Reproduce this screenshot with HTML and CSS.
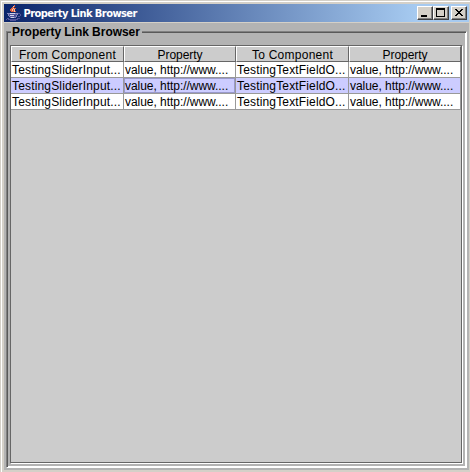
FILE: index.html
```
<!DOCTYPE html>
<html lang="en">
<head>
<meta charset="utf-8">
<title>Property Link Browser</title>
<link rel="stylesheet" href="styles.css">
</head>
<body>
<div class="window">
  <header class="titlebar">
    <svg class="java" width="16" height="16" viewBox="0 0 16 16" shape-rendering="crispEdges">
      <path fill="#e0603c" d="M8 0h1v2h-1zM6 2h2v1h-2zM5 3h2v1h-2zM4 4h2v2h-2zM5 6h2v1h-2zM8 3h2v1h-2zM7 4h1v3h-1zM9 6h1v1h-1z"/>
      <path fill="#f8c4a8" d="M7 1h1v1h-1zM7 3h1v1h-1zM6 4h1v2h-1zM8 4h1v2h-1zM8 6h1v1h-1z"/>
      <path fill="#8487bd" d="M1 8h11v1h-11zM2 9h1v2h-1zM3 11h1v1h-1zM4 12h6v1h-6zM10 10h1v2h-1zM11 9h1v1h-1z"/>
      <path fill="#50549a" d="M3 9h8v1h-8zM3 10h1v1h-1zM8 10h2v1h-2zM4 11h6v1h-6zM4 15h6v1h-6zM12 8h2v1h-2zM14 9h1v2h-1zM12 11h2v1h-2zM1 13h2v1h-2zM0 14h1v1h-1zM2 14h10v1h-10zM11 13h3v1h-3z"/>
      <path fill="#d0d2ea" d="M4 8h5v1h-5zM4 10h4v1h-4zM5 12h3v1h-3z"/>
    </svg>
    <h1>Property Link Browser</h1>
    <div class="controls">
      <button class="ctl" aria-label="Minimize"><svg width="14" height="12" shape-rendering="crispEdges"><path d="M3 8h6v2h-6z"/></svg></button>
      <button class="ctl" aria-label="Maximize"><svg width="14" height="12" shape-rendering="crispEdges"><path fill-rule="evenodd" d="M2 1h9v9h-9zM3 3v6h7v-6z"/></svg></button>
      <button class="ctl close" aria-label="Close"><svg width="14" height="12" shape-rendering="crispEdges"><path d="M3 2h2v1h1v1h2v-1h1v-1h2v1h-1v1h-1v1h-1v1h1v1h1v1h1v1h-2v-1h-1v-1h-2v1h-1v1h-2v-1h1v-1h1v-1h1v-1h-1v-1h-1v-1h-1z"/></svg></button>
    </div>
  </header>
  <main class="content">
    <section class="group">
      <h2>Property Link Browser</h2>
      <div class="scroll">
        <table>
          <colgroup><col class="wide"><col class="narrow"><col class="wide"><col class="narrow"></colgroup>
          <thead><tr><th>From Component</th><th class="v">Property</th><th>To Component</th><th class="v">Property</th></tr></thead>
          <tbody>
            <tr><td>TestingSliderInput...</td><td class="v">value, http://www....</td><td>TestingTextFieldO...</td><td class="v">value, http://www....</td></tr>
            <tr class="selected"><td>TestingSliderInput...</td><td class="v focus">value, http://www....</td><td>TestingTextFieldO...</td><td class="v">value, http://www....</td></tr>
            <tr><td>TestingSliderInput...</td><td class="v">value, http://www....</td><td>TestingTextFieldO...</td><td class="v">value, http://www....</td></tr>
          </tbody>
        </table>
      </div>
    </section>
  </main>
</div>
</body>
</html>
```
FILE: styles.css
```
* { box-sizing: border-box; }
body { margin: 0; background: #d4d0c8; }
.window {
  width: 470px; height: 472px; padding: 3px 1px 2px 3px;
  background: #d4d0c8; border: 1px solid #d4d0c8; border-width: 1px 0 0 1px;
  box-shadow: inset 1px 1px #fff;
  font-family: "Liberation Sans", Arial, sans-serif; color: #000;
}
.titlebar {
  height: 18px; display: flex; align-items: center; padding: 0 2px;
  background: linear-gradient(90deg, #0a246a, #a6caf0 412px);
}
.java { flex: none; }
h1 {
  margin: 1px 0 0 1.5px; flex: 1; color: #fff; white-space: nowrap;
  font: bold 11px/16px "DejaVu Sans Condensed", sans-serif; letter-spacing: -.55px;
}
.controls { display: flex; }
.ctl {
  width: 16px; height: 14px; padding: 0; background: #d4d0c8;
  border: 1px solid; border-color: #fff #404040 #404040 #fff;
  box-shadow: inset -1px -1px #808080;
}
.ctl svg { display: block; }
.close { margin-left: 2px; }
.content { height: 447px; margin-top: 1px; padding: 3px 2px 2px; background: #b3b3b3; }
.group { position: relative; height: 442px; padding: 19px 5px 5px 4px; }
.group::before {
  content: ""; position: absolute; inset: 5px 0 0;
  border: 1px solid; border-color: #808080 #fff #fff #808080;
  box-shadow: inset 1px 1px #595959, inset -1px -1px #fff;
}
h2 {
  position: absolute; left: 5px; top: -1px; margin: 0; padding: 0 2px 0 1px;
  background: #b3b3b3; font: bold 12px/14px "Liberation Sans", Arial, sans-serif;
  white-space: nowrap; letter-spacing: -.04px;
}
.scroll {
  height: 418px; border: 1px solid #666; background: #ccc; box-shadow: 1px 1px #fff;
}
table { width: 450px; table-layout: fixed; border-collapse: separate; border-spacing: 0; }
.wide { width: 113px; }
.narrow { width: 112px; }
th {
  height: 16px; padding: 2px 0 0; font-size: 12px; font-weight: normal; line-height: 12px;
  background: #ccc; border: 1px solid; border-color: #fff #666 #666 #fff;
  text-align: center; letter-spacing: .26px;
}
td {
  height: 16px; padding: 1px 0 0 1px; font-size: 12px; line-height: 14px; white-space: nowrap; overflow: hidden;
  background: #fff; border: 1px solid #999; border-width: 0 1px 1px 0; letter-spacing: .16px;
}
.v { letter-spacing: -.04px; }
.selected td { background: #ccf; }
.selected .focus { box-shadow: inset 0 0 0 1px #99c; }
```
